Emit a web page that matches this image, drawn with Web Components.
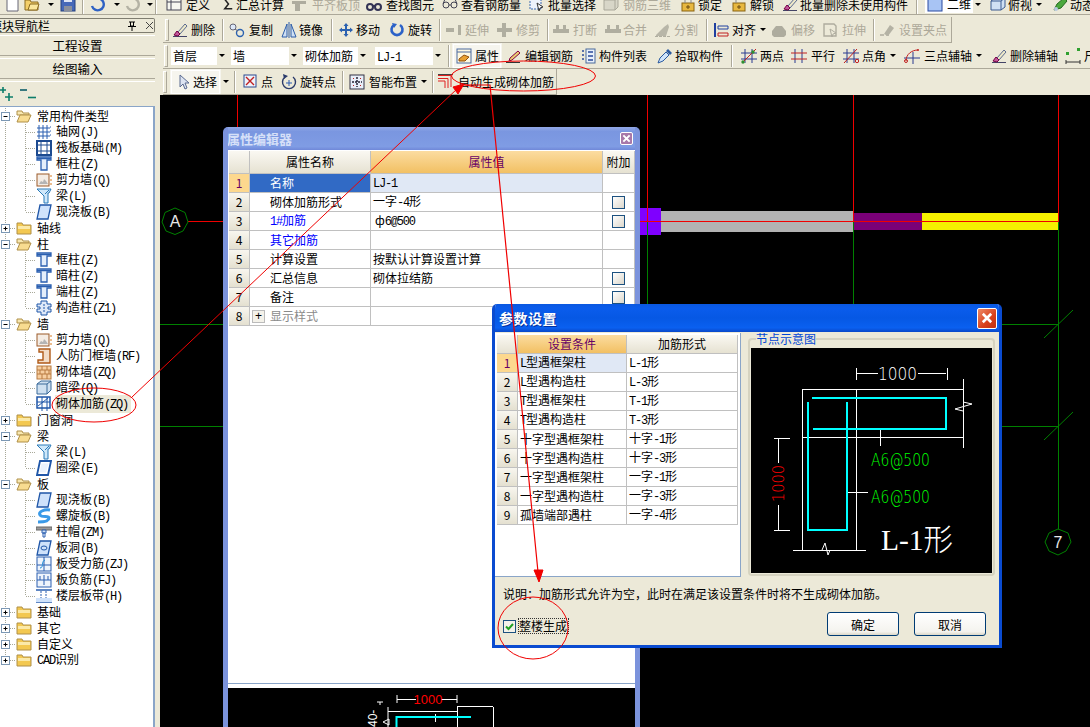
<!DOCTYPE html>
<html lang="zh">
<head>
<meta charset="utf-8">
<title>属性编辑器</title>
<style>
  html, body { margin: 0; height: 100%; overflow: hidden; background: #ece9d8; }
  body { font: 12px "Noto Sans CJK SC", sans-serif; color: #000; }
</style>
</head>
<body>
<x-app>
  <x-toptools slot="top"></x-toptools>
  <x-nav slot="nav"></x-nav>
  <x-edittools slot="tools"></x-edittools>
  <x-canvas slot="canvas">
    <x-window x="63" y="32" w="417" h="610" name="属性编辑器" inactive>
      <x-prop-pane></x-prop-pane>
    </x-window>
    <x-window x="332" y="209" w="510" h="344" name="参数设置">
      <x-param-pane></x-param-pane>
    </x-window>
  </x-canvas>
  <x-marks slot="marks"></x-marks>
</x-app>

<script>
// ascii in the reference is half width bitmap text, so it gets its own mono run
const mix = (text) => String(text).replace(/[\x21-\x7e]+/g, (m) => `<span class="m">${m}</span>`);
const BASE = `.m { font-family: "Liberation Mono", monospace; letter-spacing: -1.2px; }`;

const svg16 = (inner, size = 16) =>
  `<svg width="${size}" height="${size}" viewBox="0 0 16 16" fill="none">${inner}</svg>`;

const ICONS = {
  // toolbar
  doc: '<path d="M3 0h8l3 3v12H3z" fill="#fff" stroke="#667"/>',
  open: '<path d="M1 4h5l1 2h7v8H1z" fill="#f3cf6a" stroke="#8a6a20"/><path d="M4 14l2-6h9l-2 6z" fill="#fbe79c" stroke="#8a6a20"/>',
  save: '<rect x="1" y="1" width="14" height="14" fill="#4668b8" stroke="#24407c"/><rect x="4" y="1" width="8" height="5" fill="#dde4f4"/><rect x="4" y="10" width="8" height="5" fill="#8a8f9c"/>',
  undo: '<path d="M3 10a6 6 0 1 0 3-7" stroke="#2f62c4" stroke-width="2.4"/>',
  undoGray: '<path d="M3 10a6 6 0 1 0 3-7" stroke="#b4b2a4" stroke-width="2.4"/>',
  define: '<rect x="1" y="2" width="14" height="12" fill="#f6f6f0" stroke="#445"/><path d="M1 6h14M5 2v12" stroke="#445"/>',
  sigma: '<path d="M12 3H4l4 5-4 5h8" stroke="#222" stroke-width="1.6"/>',
  flush: '<path d="M1 5h14v3H9v7H4V8H1z" fill="#aeac9e"/>',
  find: '<circle cx="4" cy="11" r="3" stroke="#335" stroke-width="2"/><circle cx="12" cy="11" r="3" stroke="#335" stroke-width="2"/><path d="M7 10h2" stroke="#335" stroke-width="2"/>',
  glasses: '<circle cx="4" cy="9" r="3" stroke="#445"/><circle cx="12" cy="9" r="3" stroke="#445"/><path d="M7 9h2M1 8l2-5M15 8l-2-5" stroke="#445"/>',
  batch: '<rect x="1" y="2" width="11" height="11" fill="#eef3fb" stroke="#3a68b0" stroke-dasharray="2 1"/><path d="M8 7l6 4-3 1-1 3z" fill="#fff" stroke="#333"/>',
  rebar3d: '<path d="M1 4l4-2h10v9l-3 3H1z" fill="#d8d6c8" stroke="#aaa89a"/><path d="M1 4h11v10M12 4l3-2" stroke="#aaa89a"/>',
  lock: '<rect x="2" y="7" width="12" height="8" fill="#e8b840" stroke="#8a6410"/><path d="M5 7V4a3 3 0 0 1 6 0v3" stroke="#888"/><path d="M8 9v4M6 11h4" stroke="#6a4a10"/>',
  unlock: '<rect x="1" y="7" width="12" height="8" fill="#e8b840" stroke="#8a6410"/><path d="M4 7V4a3 3 0 0 1 6 0" stroke="#888"/><path d="M7 9v4M5 11h4" stroke="#6a4a10"/>',
  brush: '<path d="M1 14.5h14" stroke="#446"/><path d="M6 10l7-8 2 2-7 8z" fill="#eee9c8" stroke="#5a6a90"/><path d="M2 13l3-4 3 3-2 2z" fill="#c0589a" stroke="#704"/>',
  view2d: '<rect x="1" y="1" width="14" height="14" fill="#a8c4f4" stroke="#2a4aa0"/>',
  top: '<path d="M1 5l4-3h10v9l-4 3H1z" fill="#cfe0f4" stroke="#3a5a90"/><path d="M1 5h10v9M11 5l4-3" stroke="#3a5a90"/>',
  dynamic: '<path d="M2 14l3-6 7-6 3 3-6 7z" fill="#4aa83c" stroke="#256a20"/><circle cx="4" cy="13" r="2" fill="#b8c8e0"/>',
  copy: '<circle cx="4" cy="5" r="3" fill="#dde8f8" stroke="#667"/><circle cx="11" cy="11" r="3.5" stroke="#2c62b0" stroke-width="1.4"/><path d="M6 7l3 2" stroke="#667"/>',
  mirror: '<path d="M1 15L6 2v13zM15 15L10 2v13z" fill="#cfe0f4" stroke="#2c5ca8"/><path d="M8 0v16" stroke="#2c5ca8"/>',
  move: '<path d="M8 1l2.500 3H9v3h3V5.500l3 2.500-3 2.500V9H9v3h1.500L8 15l-2.500-3H7V9H4v1.500L1 8l3-2.500V7h3V4H5.500z" fill="#2c62b0"/>',
  rotate: '<path d="M11 3a5.500 5.500 0 1 1-6 0" stroke="#2c62c8" stroke-width="2.600"/><path d="M3 1l5 1-3 4z" fill="#2c62c8"/>',
  extend: '<path d="M0 6h8v4H0z" fill="#b0aea0"/><path d="M12 3h3v10h-3z" fill="#b0aea0"/>',
  trim: '<path d="M0 6h15v4H0z" fill="#b0aea0"/><path d="M5 1h4v14H5z" fill="#b0aea0"/>',
  breakg: '<path d="M0 7h16v4H0z" fill="#b0aea0"/><path d="M3 3h3v4H3zM10 3h3v4h-3z" fill="#b0aea0"/>',
  merge: '<path d="M0 7h16v4H0z" fill="#b0aea0"/><path d="M2 3h3v4H2zM11 3h3v4h-3z" fill="#b0aea0"/>',
  split: '<path d="M1 13l8-8 4-3 1 3-3 9H1z" fill="#b8b6a8"/><path d="M0 14.500h16" stroke="#b0aea0" stroke-dasharray="3 1"/>',
  align: '<path d="M1 1v14" stroke="#2040a0" stroke-width="2"/><path d="M4 4h10v3H4z" stroke="#2040a0"/><path d="M4 11h10v3H4z" stroke="#c02020"/>',
  offset: '<path d="M1 9l4-5h6l4 5v4l-2 2H3l-2-2z" fill="#aeac9e"/>',
  stretch: '<path d="M1 2h10l2 2v10H1z" stroke="#aeac9e" stroke-width="1.400"/><path d="M7 7l6 4-3 1-1 3z" stroke="#aeac9e"/>',
  grip: '<path d="M1 13h4M7 13h3" stroke="#aeac9e" stroke-width="1.500"/><path d="M5 12l6-9 4 3-6 8z" fill="#b4b2a4"/>',
  props: '<rect x="1" y="1" width="14" height="14" fill="#fff8e0" stroke="#4a6aa0"/><path d="M1 4h14" stroke="#4a6aa0"/><path d="M3 11l5-4 5 2-4 4H3z" fill="#e8a030" stroke="#905010"/>',
  edit: '<path d="M0 14.500h14" stroke="#333"/><path d="M3 13l1-3 8-7 2 2-8 7z" fill="#e8d070" stroke="#804"/>',
  list: '<rect x="5" y="1" width="9" height="14" fill="#e8f0fa" stroke="#4a6a9a"/><path d="M1 3h2M1 7h2M1 11h2M7 4h5M7 8h5M7 12h5" stroke="#2a4a9a" stroke-width="1.500"/>',
  pick: '<path d="M1 15l2-5 6-6 3 3-6 6z" fill="#cfe4fa" stroke="#2a5aa0"/><path d="M9 3l2-2 4 4-2 2z" fill="#2a5aa0"/>',
  two: '<path d="M4 1v14M11 1v14M0 5h16M0 11h16" stroke="#2a3a90"/><path d="M1 15L15 1" stroke="#c02020"/><circle cx="2" cy="14" r="1.700" fill="#2f8f2f"/><circle cx="12" cy="4" r="1.700" fill="#2f8f2f"/>',
  parallel: '<path d="M4 1v14M11 1v14" stroke="#2a3a90"/><path d="M0 5h16M0 11h16" stroke="#c02020"/>',
  angle: '<path d="M4 1v14M11 1v14M0 5h16M0 11h16" stroke="#2a3a90"/><path d="M1 15L14 1" stroke="#c02020"/><circle cx="14" cy="13" r="1.700" stroke="#c02020"/>',
  arc: '<path d="M0 10h16M9 4v12" stroke="#2a3a90"/><path d="M2 13C2 6 8 2 14 2" stroke="#c02020"/><circle cx="2" cy="13" r="1.500" stroke="#c02020"/><circle cx="14" cy="2" r="1" fill="#c02020"/>',
  dim: '<path d="M1 12v4M15 12v4M1 14h14" stroke="#333"/><rect x="1" y="4" width="3" height="3" fill="#2fa02f"/><rect x="12" y="0" width="3" height="3" fill="#2fa02f"/>',
  arrow: '<path d="M3 1v12l3-3 2 5 2-1-2-5h4z" fill="#dde4f2" stroke="#5a6a90"/>',
  point: '<rect x="1" y="1" width="12" height="12" fill="#eef3fb" stroke="#2a4a90"/><path d="M3 3l8 8M11 3l-8 8" stroke="#c02020" stroke-width="1.400"/>',
  rotpt: '<path d="M12 3a6.500 6.500 0 1 1-8 0" stroke="#2a3a6a" stroke-width="1.400"/><path d="M2 0l5 2-4 3z" fill="#2a3a6a"/><path d="M8 6v6M5 9h6" stroke="#2a5ab0"/>',
  smart: '<rect x="1" y="1" width="14" height="14" fill="#e8eef8" stroke="#334"/><path d="M8 3v10M3 8h10" stroke="#223" stroke-dasharray="2 1" stroke-width="1.500"/><path d="M4 4h1v1H4zM11 4h1v1h-1zM4 11h1v1H4zM11 11h1v1h-1z" fill="#c02020"/>',
  auto: '<path d="M0 1.500h13V13M0 4.500h10V14M0 7h7v7" stroke="#e02020"/><path d="M0 .5h15" stroke="#444"/>',
  // tree
  grid: '<path d="M3 1v14M7 1v14M11 1v14M1 4h13M1 8h13M1 12h13" stroke="#2a5fb0"/><path d="M14 3h2M14 7h2M14 11h2" stroke="#2a5fb0" stroke-dasharray="1 1"/>',
  raft: '<rect x="1" y="1" width="14" height="14" fill="#fff" stroke="#1c4a90" stroke-width="2"/><path d="M5 1v14M11 1v14M1 5h14M1 11h14" stroke="#1c4a90"/>',
  col: '<path d="M1 1h14v3H11v10H5V4H1z" fill="#e4eefb" stroke="#2a5fb0" stroke-width="1.300"/><path d="M1 2.500h14" stroke="#2a5fb0" stroke-width="1.500"/>',
  shear: '<rect x="1" y="2" width="12" height="12" fill="#f4ece4" stroke="#9c5a28"/><path d="M3 12l2-3 2 1 1-3 2 2 2 3z" fill="#b4b4b4"/><path d="M14 4h2M14 8h2M14 12h2" stroke="#d87a20"/>',
  beam: '<path d="M1 1h14l-2 4h-1v10H8V8z" fill="#cfe8fa" stroke="#2a7ab8"/><path d="M5 5l3 3M13 2l-4 4" stroke="#2a7ab8"/>',
  slab: '<path d="M4 1h11l-3 14H1z" fill="#cfe2fb" stroke="#1f56a8" stroke-width="1.300"/>',
  cons: '<path d="M5 1h6v3h4v3h-3v2h3v3h-4v3H5v-3H1V9h3V7H1V4h4z" fill="#dfe9f8" stroke="#1f56a8"/><path d="M8 4v8" stroke="#1f56a8" stroke-dasharray="2 1"/>',
  door: '<path d="M3 1h11v14H2v-3h5V4H3z" fill="#f2ddc8" stroke="#b05a18" stroke-width="1.400"/>',
  brick: '<rect x="1" y="2" width="14" height="13" fill="#f7cfa0" stroke="#b87a40"/><path d="M1 6h14M1 10h14M6 2v4M11 2v4M4 6v4M9 6v4M13 6v4M6 10v5M11 10v5" stroke="#b87a40"/>',
  hidden: '<path d="M1 4l4-3h10v9l-4 4H1z" fill="#cfe0f0" stroke="#3a6a9a"/><path d="M1 4h10v10M11 4l4-3" stroke="#3a6a9a"/>',
  wallbar: '<rect x="1" y="1" width="13" height="11" fill="#fff" stroke="#1f56a8" stroke-width="1.500"/><path d="M2 10L12 2M6 1v14M11 1v14M1 6h13" stroke="#1f56a8"/>',
  ring: '<path d="M4 1h11l-3 14H1z" stroke="#1f56a8" stroke-width="1.800"/><path d="M5.500 3.500h7L10 12.500H3.500z" fill="#eaf2fd"/>',
  spiral: '<path d="M14 2C8 1 2 4 4 7s9 0 9 3-6 4-11 4" stroke="#3a9ae8" stroke-width="3"/>',
  cap: '<path d="M0 3h16v3H0z" fill="#9a9a9a" stroke="#666"/><path d="M6 6h4v3H6z" fill="#cfe0f4" stroke="#2a5fb0"/><path d="M7 9h2v4H7z" stroke="#2a5fb0"/>',
  hole: '<path d="M4 1h11l-3 14H1z" fill="#cfe2fb" stroke="#1f56a8" stroke-width="1.300"/><ellipse cx="8" cy="8" rx="3" ry="2" stroke="#1f56a8"/>',
  sbar: '<rect x="1" y="1" width="14" height="14" fill="#eef4fc" stroke="#2a5fb0"/><path d="M1 9h14M8 1v14" stroke="#2a5fb0"/><path d="M4 12C8 12 5 5 9 4" stroke="#1f8fd8"/>',
  neg: '<rect x="1" y="1" width="14" height="14" fill="#eef4fc" stroke="#2a5fb0"/><path d="M1 8h14M8 3v10M4 4v4M12 4v4" stroke="#2a5fb0"/>',
  band: '<path d="M0 2h16M0 14h16" stroke="#2a5fb0" stroke-width="1.500"/><path d="M5 3v10M10 3v10" stroke="#2a5fb0" stroke-dasharray="2 1"/><rect y="10" width="16" height="4" fill="#cfe2fb"/>',
};

class XApp extends HTMLElement {
  shadowRoot = this.attachShadow({ mode: 'open' });

  connectedCallback() {
    this.shadowRoot.innerHTML = `
      <style>
        :host { display: grid; grid-template-columns: 160px 1fr; grid-template-rows: 15px 80px 1fr; width: 1090px; height: 727px; position: relative; overflow: hidden; }
        .top { grid-column: 1 / 3; overflow: hidden; }
        .nav { grid-row: 2 / 4; min-height: 0; }
        .canvas { min-width: 0; min-height: 0; }
      </style>
      <div class="top"><slot name="top"></slot></div>
      <div class="nav"><slot name="nav"></slot></div>
      <div><slot name="tools"></slot></div>
      <div class="canvas"><slot name="canvas"></slot></div>
      <slot name="marks"></slot>
    `;
  }
}

class XTool extends HTMLElement {
  shadowRoot = this.attachShadow({ mode: 'open' });

  connectedCallback() {
    const tx = this.getAttribute('tx') || 19;
    const pl = this.getAttribute('pl') || 0;
    const ic = this.getAttribute('ic');
    const label = this.getAttribute('label') || '';
    const gray = this.hasAttribute('gray');
    const hot = this.hasAttribute('hot');
    this.shadowRoot.innerHTML = `
      <style>
        :host { display: flex; flex: none; align-items: center; width: ${this.getAttribute('w') || 50}px; height: 26px; white-space: nowrap; color: ${gray ? '#aca899' : '#000'}; box-sizing: border-box; }
        ${hot ? ':host { background: #f6f5ee; outline: 1px solid #fff; outline-offset: -2px; }' : ''}
        ${BASE}
        .ic { flex: none; width: ${tx}px; box-sizing: border-box; padding-left: ${pl}px; display: flex; }
        .tri { width: 0; height: 0; margin-left: 4px; border: 3px solid transparent; border-top: 3px solid #000; border-bottom: 0; }
      </style>
      <span class="ic">${ic ? svg16(ICONS[ic]) : ''}</span>
      <span>${mix(label)}</span>
      ${this.hasAttribute('arrow') ? '<span class="tri"></span>' : ''}
    `;
  }
}

class XSep extends HTMLElement {
  shadowRoot = this.attachShadow({ mode: 'open' });

  connectedCallback() {
    this.shadowRoot.innerHTML = `
      <style>
        :host { display: flex; flex: none; width: ${this.getAttribute('w') || 7}px; height: 22px; align-self: center; }
        i { display: block; width: 1px; height: 100%; background: #aca899; box-shadow: 1px 0 #fff; }
        .tri { width: 0; height: 0; margin: auto 0 auto 2px; border: 3px solid transparent; border-top: 3px solid #000; border-bottom: 0; }
      </style>
      ${this.hasAttribute('tri') ? '<span class="tri"></span>' : '<i></i>'}
    `;
  }
}

class XCombo extends HTMLElement {
  shadowRoot = this.attachShadow({ mode: 'open' });

  connectedCallback() {
    const ic = this.getAttribute('ic');
    this.shadowRoot.innerHTML = `
      <style>
        :host { display: flex; flex: none; width: ${this.getAttribute('w')}px; height: 18px; align-self: center; margin-right: ${this.getAttribute('mr') || 0}px; background: #fff; line-height: 17px; white-space: nowrap; }
        ${BASE}
        svg { flex: none; margin: 1px 2px 0 2px; }
        .v { flex: 1; padding-left: 2px; overflow: hidden; }
        .b { flex: none; width: 10px; background: #ece9d8; border-left: 1px solid #fff; display: flex; align-items: center; justify-content: center; }
        .b i { border: 3px solid transparent; border-top: 3px solid #000; border-bottom: 0; }
      </style>
      ${ic ? svg16(ICONS[ic]) : ''}
      <span class="v">${mix(this.getAttribute('value'))}</span>
      <span class="b"><i></i></span>
    `;
  }
}

class XToolbar extends HTMLElement {
  shadowRoot = this.attachShadow({ mode: 'open' });

  connectedCallback() {
    const width = this.getAttribute('width');
    const grip = !this.hasAttribute('nogrip');
    this.shadowRoot.innerHTML = `
      <style>
        :host { display: flex; align-items: center; height: 26px; box-sizing: border-box; padding-left: ${this.getAttribute('pl') || 0}px; ${width ? `width: ${width}px;` : ''} border-bottom: 1px solid #aca899; border-right: ${width ? '1px solid #aca899' : '0'}; overflow: hidden; white-space: nowrap; }
        .grip { flex: none; width: 2px; height: 20px; border: 1px solid #fff; border-right-color: #aca899; border-bottom-color: #aca899; margin-right: 3px; }
      </style>
      ${grip ? '<span class="grip"></span>' : ''}
      <slot></slot>
    `;
  }
}

class XTopTools extends HTMLElement {
  shadowRoot = this.attachShadow({ mode: 'open' });

  connectedCallback() {
    this.shadowRoot.innerHTML = `
      <style>
        :host { display: block; height: 15px; border-bottom: 1px solid #aca899; box-sizing: border-box; overflow: hidden; }
        .row { display: flex; align-items: center; height: 26px; margin-top: -9px; padding-left: 4px; }
      </style>
      <div class="row">
        <x-tool w="20" tx="16" ic="doc"></x-tool>
        <x-tool w="22" tx="18" ic="open"></x-tool>
        <x-sep w="14" tri></x-sep>
        <x-tool w="22" tx="16" ic="save"></x-tool>
        <x-sep w="7"></x-sep>
        <x-tool w="23" tx="16" ic="undo"></x-tool>
        <x-sep w="12" tri></x-sep>
        <x-tool w="21" tx="16" ic="undoGray"></x-tool>
        <x-sep w="10" tri></x-sep>
        <x-sep w="11"></x-sep>
        <x-tool w="55" tx="20" ic="define" label="定义"></x-tool>
        <x-tool w="70" tx="15" ic="sigma" label="汇总计算"></x-tool>
        <x-tool w="75" tx="21" ic="flush" label="平齐板顶" gray></x-tool>
        <x-tool w="76" tx="20" ic="find" label="查找图元"></x-tool>
        <x-tool w="87" tx="19" ic="glasses" label="查看钢筋量"></x-tool>
        <x-tool w="74" tx="19" ic="batch" label="批量选择"></x-tool>
        <x-tool w="77" tx="20" ic="rebar3d" label="钢筋三维" gray></x-tool>
        <x-tool w="52" tx="18" ic="lock" label="锁定"></x-tool>
        <x-tool w="50" tx="18" ic="unlock" label="解锁"></x-tool>
        <x-tool w="134" tx="18" ic="brush" label="批量删除未使用构件"></x-tool>
        <x-sep w="9"></x-sep>
        <x-combo w="58" mr="7" ic="view2d" value="二维"></x-combo>
        <x-tool w="62" tx="18" ic="top" label="俯视" arrow></x-tool>
        <x-tool w="40" tx="18" ic="dynamic" label="动态"></x-tool>
      </div>
    `;
  }
}

class XEditTools extends HTMLElement {
  shadowRoot = this.attachShadow({ mode: 'open' });

  connectedCallback() {
    this.shadowRoot.innerHTML = `
      <style>
        :host { display: flex; flex-direction: column; height: 80px; box-sizing: border-box; padding: 2px 0 0 3px; }
      </style>
      <x-toolbar width="789" pl="2">
        <x-tool w="50" tx="19" ic="brush" label="删除"></x-tool>
        <x-sep></x-sep>
        <x-tool w="52" tx="20" ic="copy" label="复制"></x-tool>
        <x-tool w="50" tx="18" ic="mirror" label="镜像"></x-tool>
        <x-sep></x-sep>
        <x-tool w="51" tx="18" ic="move" label="移动"></x-tool>
        <x-tool w="50" tx="19" ic="rotate" label="旋转"></x-tool>
        <x-sep></x-sep>
        <x-tool w="51" tx="19" ic="extend" label="延伸" gray></x-tool>
        <x-tool w="50" tx="19" ic="trim" label="修剪" gray></x-tool>
        <x-sep w="6"></x-sep>
        <x-tool w="52" tx="20" ic="breakg" label="打断" gray></x-tool>
        <x-tool w="50" tx="18" ic="merge" label="合并" gray></x-tool>
        <x-tool w="51" tx="19" ic="split" label="分割" gray></x-tool>
        <x-sep w="8"></x-sep>
        <x-tool w="57" tx="18" ic="align" label="对齐" arrow></x-tool>
        <x-tool w="52" tx="20" ic="offset" label="偏移" gray></x-tool>
        <x-tool w="50" tx="19" ic="stretch" label="拉伸" gray></x-tool>
        <x-sep w="6"></x-sep>
        <x-tool w="70" tx="20" ic="grip" label="设置夹点" gray></x-tool>
      </x-toolbar>
      <x-toolbar pl="1">
        <x-combo w="56" mr="4" value="首层"></x-combo>
        <x-combo w="68" mr="4" value="墙"></x-combo>
        <x-combo w="65" mr="7" value="砌体加筋"></x-combo>
        <x-combo w="68" mr="5" value="LJ-1"></x-combo>
        <x-sep w="4"></x-sep>
        <x-tool w="50" tx="23" pl="4" hot ic="props" label="属性"></x-tool>
        <span style="width:4px;flex:none"></span>
        <x-tool w="75" tx="19" ic="edit" label="编辑钢筋"></x-tool>
        <x-tool w="76" tx="18" ic="list" label="构件列表"></x-tool>
        <x-tool w="74" tx="18" ic="pick" label="拾取构件"></x-tool>
        <x-sep w="10"></x-sep>
        <x-tool w="50" tx="19" ic="two" label="两点"></x-tool>
        <x-tool w="52" tx="20" ic="parallel" label="平行"></x-tool>
        <x-tool w="61" tx="19" ic="angle" label="点角" arrow></x-tool>
        <x-tool w="87" tx="20" ic="arc" label="三点辅轴" arrow></x-tool>
        <x-tool w="74" tx="19" ic="brush" label="删除辅轴"></x-tool>
        <x-tool w="40" tx="19" ic="dim" label="尺寸"></x-tool>
      </x-toolbar>
      <x-toolbar width="394" pl="0">
        <x-tool w="51" tx="23" pl="7" hot ic="arrow" label="选择"></x-tool>
        <x-sep w="13" tri></x-sep>
        <x-sep w="9"></x-sep>
        <x-tool w="38" tx="18" ic="point" label="点"></x-tool>
        <x-tool w="61" tx="19" ic="rotpt" label="旋转点"></x-tool>
        <x-sep></x-sep>
        <x-tool w="83" tx="20" ic="smart" label="智能布置" arrow></x-tool>
        <x-sep w="6"></x-sep>
        <x-tool w="118" tx="20" ic="auto" label="自动生成砌体加筋"></x-tool>
      </x-toolbar>
    `;
  }
}

class XTreeRow extends HTMLElement {
  shadowRoot = this.attachShadow({ mode: 'open' });

  connectedCallback() {
    const child = this.hasAttribute('child');
    const last = this.hasAttribute('last');
    const open = this.hasAttribute('open');
    const end = this.hasAttribute('end');
    const dot = 'stroke="#a8a898" stroke-dasharray="1 1"';
    const rootV = end ? `<path d="M5.500 0v4" ${dot}/>` : `<path d="M5.500 0v16" ${dot}/>`;
    let guide;
    let icon;
    if (child) {
      guide = `<svg width="36" height="16" fill="none">${rootV}
        <path d="M25.500 0v${last ? 8 : 16}M26 8.500h10" ${dot}/></svg>`;
      icon = svg16(ICONS[this.getAttribute('ic')]);
    } else {
      guide = `<svg width="16" height="16" fill="none">${rootV}
        <path d="M10 8.500h6" ${dot}/>
        <rect x="1.500" y="4.500" width="8" height="8" fill="#fff" stroke="#7c98b4"/>
        <path d="M3.500 8.500h4${open ? '' : 'M5.500 6.500v4'}" stroke="#000"/></svg>`;
      icon = svg16(open
        ? '<path d="M1 3h5l1 2h6v2H1z" fill="#f8e8b0" stroke="#b09048"/><path d="M1 14l3-7h11l-3 7z" fill="#f8dc90" stroke="#b09048"/>'
        : '<path d="M1 3h5l1 2h8v9H1z" fill="#f3c850" stroke="#b09048"/><path d="M2 6h12v3H2z" fill="#fbe9a8"/>');
    }
    this.shadowRoot.innerHTML = `
      <style>
        :host { display: flex; align-items: center; height: 16px; white-space: nowrap; }
        ${BASE}
        svg { flex: none; display: block; }
        .t { margin-left: ${child ? 4 : 5}px; padding-right: 3px; line-height: 16px; ${this.hasAttribute('sel') ? 'background: #ece9d8;' : ''} }
        .t.sel { margin-left: 3px; padding-left: 1px; }
      </style>
      ${guide}${icon}
      <span class="t ${this.hasAttribute('sel') ? 'sel' : ''}">${mix(this.getAttribute('label'))}</span>
    `;
  }
}

class XNav extends HTMLElement {
  shadowRoot = this.attachShadow({ mode: 'open' });

  connectedCallback() {
    const groups = [
      ['常用构件类型', true, [['grid', '轴网(J)'], ['raft', '筏板基础(M)'], ['col', '框柱(Z)'], ['shear', '剪力墙(Q)'], ['beam', '梁(L)'], ['slab', '现浇板(B)']]],
      ['轴线', false, []],
      ['柱', true, [['col', '框柱(Z)'], ['col', '暗柱(Z)'], ['col', '端柱(Z)'], ['cons', '构造柱(Z1)']]],
      ['墙', true, [['shear', '剪力墙(Q)'], ['door', '人防门框墙(RF)'], ['brick', '砌体墙(ZQ)'], ['hidden', '暗梁(Q)'], ['wallbar', '砌体加筋(ZQ)']]],
      ['门窗洞', false, []],
      ['梁', true, [['beam', '梁(L)'], ['ring', '圈梁(E)']]],
      ['板', true, [['slab', '现浇板(B)'], ['spiral', '螺旋板(B)'], ['cap', '柱帽(ZM)'], ['hole', '板洞(B)'], ['sbar', '板受力筋(ZJ)'], ['neg', '板负筋(FJ)'], ['band', '楼层板带(H)']]],
      ['基础', false, []],
      ['其它', false, []],
      ['自定义', false, []],
      ['CAD识别', false, []],
    ];
    const rows = groups.map(([name, open, kids], g) => `
      <x-tree-row label="${name}" ${open ? 'open' : ''} ${g === groups.length - 1 ? 'end' : ''}></x-tree-row>
      ${kids.map(([ic, label], i) => `<x-tree-row child ic="${ic}" label="${label}" ${i === kids.length - 1 ? 'last' : ''} ${ic === 'wallbar' ? 'sel' : ''}></x-tree-row>`).join('')}
    `).join('');

    this.shadowRoot.innerHTML = `
      <style>
        :host { display: flex; flex-direction: column; width: 155px; height: 100%; box-sizing: border-box; padding-top: 3px; }
        .head { display: flex; align-items: center; height: 15px; border: 1px solid #7f7d70; border-left: 0; border-radius: 0 2px 2px 0; box-sizing: border-box; overflow: hidden; white-space: nowrap; }
        .head span { margin-left: -10px; }
        .head svg { margin-left: auto; flex: none; }
        .btn { height: 21px; margin-top: 2px; line-height: 19px; text-align: center; font-size: 12.500px; border-bottom: 1px solid #aca899; border-top: 1px solid #fff; box-sizing: border-box; }
        .icons { height: 25px; margin-top: 2px; display: flex; align-items: center; gap: 6px; border-top: 1px solid #fff; box-sizing: border-box; }
        .tree { flex: 1; padding-top: 1px; background: #fff; border-top: 1px solid #8aa5c8; border-right: 2px solid #8aa5c8; overflow: hidden; box-sizing: border-box; }
      </style>
      <div class="head">
        <span>模块导航栏</span>
        <svg width="26" height="12" fill="none">
          <path d="M1 2h6M2.500 2v4h3V2M0 6.500h8M4 7v4" stroke="#000"/>
          <path d="M18 2l7 7M25 2l-7 7" stroke="#444"/>
        </svg>
      </div>
      <div class="btn">工程设置</div>
      <div class="btn">绘图输入</div>
      <div class="icons">
        <svg width="14" height="14" fill="none"><path d="M0 3h6M3 0v6" stroke="#0d7d6a" stroke-width="1.600"/><path d="M5 10h8M9 6v8" stroke="#0d7d6a" stroke-width="1.600"/></svg>
        <svg width="16" height="14" fill="none"><path d="M0 3h7" stroke="#0d5d6a" stroke-width="1.600"/><path d="M8 10.500h8" stroke="#0d7d6a" stroke-width="1.600"/></svg>
      </div>
      <div class="tree">${rows}</div>
    `;
  }
}

class XCanvas extends HTMLElement {
  shadowRoot = this.attachShadow({ mode: 'open' });

  connectedCallback() {
    this.shadowRoot.innerHTML = `
      <style>
        :host { display: block; position: relative; width: 930px; height: 632px; background: #000; overflow: hidden; }
        svg { display: block; }
        text { font-family: "Liberation Sans", sans-serif; fill: #e8e8e8; }
      </style>
      <svg width="930" height="632" viewBox="160 95 930 632" fill="none">
        <rect x="640" y="208" width="21" height="27" fill="#7f00ff"/>
        <rect x="661" y="211" width="193" height="21" fill="#b2b2b2"/>
        <rect x="854" y="213" width="68" height="17" fill="#7a0078"/>
        <rect x="922" y="213" width="136" height="17" fill="#f5f000"/>
        <path d="M160 324.500h898M160 426.500h898M647.500 222V640M853.500 222V640M1058.500 222V529" stroke="#008000"/>
        <path d="M1044 338l29-28M1044 440l29-28" stroke="#008000"/>
        <path d="M237.500 95V127M647.500 95V222M853.500 95V222M1058.500 95V222M188 221.500H1058" stroke="#f00000"/>
        <polygon points="175,208 185,212.500 188,222 183,231 175,234.500 166,231 162,222 165,212.500" fill="#000" stroke="#008000"/>
        <text x="175" y="227" text-anchor="middle" font-size="16">A</text>
        <polygon points="1058,529 1068,533 1071,542 1066,551 1058,555 1049,551 1045,542 1049,533" fill="#000" stroke="#008000"/>
        <text x="1058" y="548" text-anchor="middle" font-size="16">7</text>
      </svg>
      <slot></slot>
    `;
  }
}

class XWindow extends HTMLElement {
  shadowRoot = this.attachShadow({ mode: 'open' });

  connectedCallback() {
    const off = this.hasAttribute('inactive');
    const a = (n) => this.getAttribute(n);
    this.shadowRoot.innerHTML = `
      <style>
        :host { position: absolute; left: ${a('x')}px; top: ${a('y')}px; width: ${a('w')}px; height: ${a('h')}px; display: flex; flex-direction: column; box-sizing: border-box; border-radius: 5px 5px 0 0; overflow: hidden; border: ${off ? '5px solid #7b93dc' : '3px solid #0a4bd0'}; border-top: 0; background: #ece9d8; }
        .title { flex: none; display: flex; align-items: center; height: ${off ? 23 : 28}px; margin: 0 ${off ? -5 : -3}px; padding: 0 ${off ? 7 : 5}px 0 ${off ? 4 : 7}px; font-weight: 700; background: ${off ? 'linear-gradient(#92a8e6, #7a96e0 20%, #7f9ce4 85%, #7088d8)' : 'linear-gradient(#0a58e0, #0a5cec 15%, #0658e4 50%, #0a60f0 85%, #0a48c8)'}; color: ${off ? '#d6e0f8' : '#fff'}; font-size: ${off ? 13 : 14}px; letter-spacing: ${off ? 0 : 0.500}px; ${off ? '' : 'text-shadow: 1px 1px #0030a0;'} }
        .x { margin-left: auto; flex: none; box-sizing: border-box; border: 1px solid #fff; border-radius: 2px; display: flex; align-items: center; justify-content: center; width: ${off ? 13 : 20}px; height: ${off ? 13 : 21}px; background: ${off ? '#a878a8' : 'linear-gradient(135deg, #ee8a66, #d8401c 60%, #c03010)'}; }
        .client { flex: 1; min-height: 0; background: ${off ? '#fff' : '#ece9d8'}; }
      </style>
      <div class="title">
        <span>${a('name')}</span>
        <span class="x"><svg width="${off ? 9 : 12}" height="${off ? 9 : 12}" viewBox="0 0 10 10"><path d="M1.500 1.500l7 7M8.500 1.500l-7 7" stroke="#fff" stroke-width="2.200"/></svg></span>
      </div>
      <div class="client"><slot></slot></div>
    `;
  }
}

class XGrid extends HTMLElement {
  shadowRoot = this.attachShadow({ mode: 'open' });

  static cell(c) {
    const o = typeof c === 'string' ? { t: c } : c;
    return `<div class="c ${o.k || ''}">${o.check ? '<i class="cb"></i>' : ''}${o.plus ? '<i class="pl">+</i>' : ''}<span>${mix(o.t || '')}</span></div>`;
  }

  set data({ head, rows }) {
    const headHtml = ['', ...head].map((h) => `<div class="c h ${h.k || ''}"><span>${mix(h.t || h)}</span></div>`).join('');
    const body = rows.map((r, i) => `
      <div class="c n ${i === 0 ? 'ncur' : ''}">${i + 1}</div>${r.map(XGrid.cell).join('')}
    `).join('');
    this.shadowRoot.innerHTML = `
      <style>
        :host { display: inline-grid; grid-template-columns: ${this.getAttribute('cols')}; grid-template-rows: ${this.getAttribute('hh')}px; grid-auto-rows: 18px; gap: 1px; padding: 0 1px 1px 0; background: #c0c0c0; vertical-align: top; }
        ${BASE}
        .c { background: #fff; line-height: 18px; padding-left: ${this.getAttribute('pad') || 2}px; white-space: nowrap; overflow: hidden; display: flex; align-items: center; }
        .h { background: linear-gradient(#faf8f2, #e6e2d2); justify-content: center; padding: 0; }
        .h.on { background: linear-gradient(#fbdca0, #f2c063); color: #660066; }
        .n { background: linear-gradient(#f8f6ef, #e4e0d0); justify-content: center; padding: 0; }
        .n.ncur { background: #fdd88e; color: #660066; }
        .name { padding-left: 20px; }
        .cur { background: #316ac5; color: #fff; }
        .lite { background: #e0e8f5; }
        .blue { color: #0000ff; }
        .gray { color: #8a8a8a; }
        .mid { justify-content: center; padding: 0; }
        .ind { padding-left: 4px; }
        .cb { width: 11px; height: 11px; border: 1px solid #1c5180; background: linear-gradient(135deg, #fff, #dcd7cb); display: block; }
        .pl { flex: none; width: 11px; height: 11px; margin: 0 5px 0 -18px; border: 1px solid #bbb; background: #f4f2ea; color: #000; font: 12px/11px "Liberation Sans", sans-serif; text-align: center; display: block; }
      </style>
      ${headHtml}${body}
    `;
  }
}

class XPropPane extends HTMLElement {
  shadowRoot = this.attachShadow({ mode: 'open' });

  connectedCallback() {
    this.shadowRoot.innerHTML = `
      <style>
        :host { display: flex; flex-direction: column; height: 100%; }
        x-grid { margin: 1px 0 0 1px; align-self: flex-start; }
        .fill { flex: none; height: 358px; border-bottom: 1px solid #8aa5c8; box-sizing: border-box; }
        .prev { flex: 1; margin-top: 4px; background: #000; }
        svg { display: block; }
        text { font-family: "Liberation Sans", sans-serif; }
      </style>
      <x-grid cols="20px 120px 231px 31px" hh="22"></x-grid>
      <div class="fill"></div>
      <div class="prev">
        <svg width="407" height="60" viewBox="228 688 407 60" fill="none">
          <path d="M397 695v8M457 695v8M397 699.500h19M441 699.500h16" stroke="#fff"/>
          <text x="428" y="704" text-anchor="middle" font-size="13" fill="#f00" stroke="none">1000</text>
          <path d="M388 707v20M388 711.500h69M457.500 707v20M457 706.500h36M493.500 707v20M435.500 714v8" stroke="#fff"/>
          <path d="M471 717H396.500V727" stroke="#00ffff" stroke-width="2"/>
          <path d="M383 722l6-3v6zM377 702h6M380 702v3" stroke="#fff"/>
          <text transform="translate(377 727) rotate(-90)" font-size="12" fill="#fff" stroke="none">40-</text>
        </svg>
      </div>
    `;
    this.shadowRoot.querySelector('x-grid').data = {
      head: ['属性名称', { t: '属性值', k: 'on' }, '附加'],
      rows: [
        [{ t: '名称', k: 'name cur' }, { t: 'LJ-1', k: 'lite' }, ''],
        [{ t: '砌体加筋形式', k: 'name' }, '一字-4形', { check: true, k: 'mid' }],
        [{ t: '1#加筋', k: 'name blue' }, { t: 'ф6@500', k: 'ind' }, { check: true, k: 'mid' }],
        [{ t: '其它加筋', k: 'name blue' }, '', ''],
        [{ t: '计算设置', k: 'name' }, '按默认计算设置计算', ''],
        [{ t: '汇总信息', k: 'name' }, '砌体拉结筋', { check: true, k: 'mid' }],
        [{ t: '备注', k: 'name' }, '', { check: true, k: 'mid' }],
        [{ t: '显示样式', k: 'name gray', plus: true }, '', ''],
      ],
    };
  }
}

class XParamPane extends HTMLElement {
  shadowRoot = this.attachShadow({ mode: 'open' });

  connectedCallback() {
    this.shadowRoot.innerHTML = `
      <style>
        :host { display: flex; flex-direction: column; height: 100%; }
        ${BASE}
        .main { display: flex; flex: none; height: 244px; margin-top: 1px; }
        .list { flex: none; width: 246px; box-sizing: border-box; background: #fff; border-bottom: 1px solid #8aa5c8; border-right: 1px solid #8aa5c8; padding: 2px 0 0 2px; }
        fieldset { flex: none; box-sizing: border-box; width: 247px; height: 243px; margin: 0 0 0 7px; padding: 0 1px 2px; border: 2px solid #d6d3c0; border-radius: 4px; min-width: 0; }
        legend { padding: 0; color: #0046d5; line-height: 12px; margin-left: 5px; }
        .pic { background: #000; height: 225px; margin-top: 3px; }
        svg { display: block; }
        .pic text { font-family: "DejaVu Sans", sans-serif; font-weight: 200; }
        .note { margin: 10px 0 0 8px; line-height: 14px; height: 14px; white-space: nowrap; }
        .foot { display: flex; align-items: flex-end; margin-top: 9px; height: 26px; padding-left: 8px; }
        .ck { display: flex; align-items: center; gap: 3px; margin-bottom: 3px; }
        .ck i { flex: none; box-sizing: border-box; width: 13px; height: 13px; border: 1px solid #1c5180; background: #f4f2ea; display: flex; }
        .ck span { outline: 1px dotted #333; line-height: 14px; padding: 0 1px 0 0; }
        button { font: inherit; width: 72px; height: 24px; padding: 0; border: 1px solid #003c74; border-radius: 3px; background: linear-gradient(#fff, #f4f3ee 85%, #dcd8c8); color: #000; }
        button.ok { margin-left: auto; }
        button + button { margin: 0 13px 0 15px; }
      </style>
      <div class="main">
        <div class="list"><x-grid cols="20px 108px 110px" hh="18"></x-grid></div>
        <fieldset>
          <legend>节点示意图</legend>
          <div class="pic">
            <svg width="241" height="225" viewBox="751 348 241 225" fill="none">
              <path d="M856.500 368v12M947.500 368v12M856 373.500h22M918 373.500h28" stroke="#fff"/>
              <text x="878" y="380" font-size="18" fill="#fff" stroke="none" textLength="39" lengthAdjust="spacingAndGlyphs">1000</text>
              <path d="M802.500 389v161M856.500 389v161M802 389.500h161M963.500 379v69M803 437.500h160M793 550.500h73M880.500 430v16M848 492.500h20" stroke="#fff"/>
              <path d="M812 398H946V429H813M808 402V530H847V402" stroke="#00ffff" stroke-width="2"/>
              <path d="M822 550l3-7 3 12 2-5M963 402l9 2-17 5 8 2" stroke="#fff"/>
              <text x="871" y="466" font-size="17" fill="#00ff00" stroke="none" textLength="59" lengthAdjust="spacingAndGlyphs">A6@500</text>
              <text x="871" y="503" font-size="17" fill="#00ff00" stroke="none" textLength="59" lengthAdjust="spacingAndGlyphs">A6@500</text>
              <path d="M778.500 438v25M778.500 505v25M774 438.500h16M774 530.500h16" stroke="#fff"/>
              <text transform="translate(784 502) rotate(-90)" font-size="16" fill="#f00" stroke="none" textLength="37" lengthAdjust="spacingAndGlyphs">1000</text>
              <text x="881" y="550" font-size="30" fill="#fff" stroke="none" style="font-family:'Liberation Serif','Noto Sans CJK SC',serif" textLength="72" lengthAdjust="spacingAndGlyphs">L-1形</text>
            </svg>
          </div>
        </fieldset>
      </div>
      <div class="note">说明：加筋形式允许为空，此时在满足该设置条件时将不生成砌体加筋。</div>
      <div class="foot">
        <label class="ck">
          <i><svg width="11" height="11" viewBox="0 0 11 11" fill="none"><path d="M2 5.500l2.500 2.500 4.500-5" stroke="#21a121" stroke-width="2"/></svg></i>
          <span>整楼生成</span>
        </label>
        <button class="ok">确定</button>
        <button>取消</button>
      </div>
    `;
    const r = (a, b, i) => (i === 0 ? [{ t: a, k: 'lite' }, b] : [a, b]);
    this.shadowRoot.querySelector('x-grid').data = {
      head: [{ t: '设置条件', k: 'on' }, '加筋形式'],
      rows: [
        ['L型遇框架柱', 'L-1形'], ['L型遇构造柱', 'L-3形'], ['T型遇框架柱', 'T-1形'],
        ['T型遇构造柱', 'T-3形'], ['十字型遇框架柱', '十字-1形'], ['十字型遇构造柱', '十字-3形'],
        ['一字型遇框架柱', '一字-1形'], ['一字型遇构造柱', '一字-3形'], ['孤墙端部遇柱', '一字-4形'],
      ].map((x, i) => r(x[0], x[1], i)),
    };
  }
}

// hand drawn red notes that lie over the whole screenshot
class XMarks extends HTMLElement {
  shadowRoot = this.attachShadow({ mode: 'open' });

  connectedCallback() {
    this.shadowRoot.innerHTML = `
      <style>
        :host { position: absolute; left: 0; top: 0; pointer-events: none; }
        svg { display: block; }
      </style>
      <svg width="1090" height="727" fill="none" stroke="#f00000">
        <ellipse cx="523.500" cy="76" rx="72" ry="15"/>
        <ellipse cx="94" cy="405" rx="42" ry="17"/>
        <ellipse cx="533" cy="628" rx="35" ry="31"/>
        <path d="M132 397L458 88"/>
        <path d="M464 84l-11 3 5 7z" fill="#f00000"/>
        <path d="M462 85H490L538 572" stroke-width="1.200"/>
        <path d="M539 582l-5-12 9 0z" fill="#f00000"/>
      </svg>
    `;
  }
}

customElements.define('x-grid', XGrid);
customElements.define('x-tool', XTool);
customElements.define('x-sep', XSep);
customElements.define('x-combo', XCombo);
customElements.define('x-toolbar', XToolbar);
customElements.define('x-toptools', XTopTools);
customElements.define('x-edittools', XEditTools);
customElements.define('x-tree-row', XTreeRow);
customElements.define('x-nav', XNav);
customElements.define('x-canvas', XCanvas);
customElements.define('x-window', XWindow);
customElements.define('x-prop-pane', XPropPane);
customElements.define('x-param-pane', XParamPane);
customElements.define('x-marks', XMarks);
customElements.define('x-app', XApp);
</script>
</body>
</html>
